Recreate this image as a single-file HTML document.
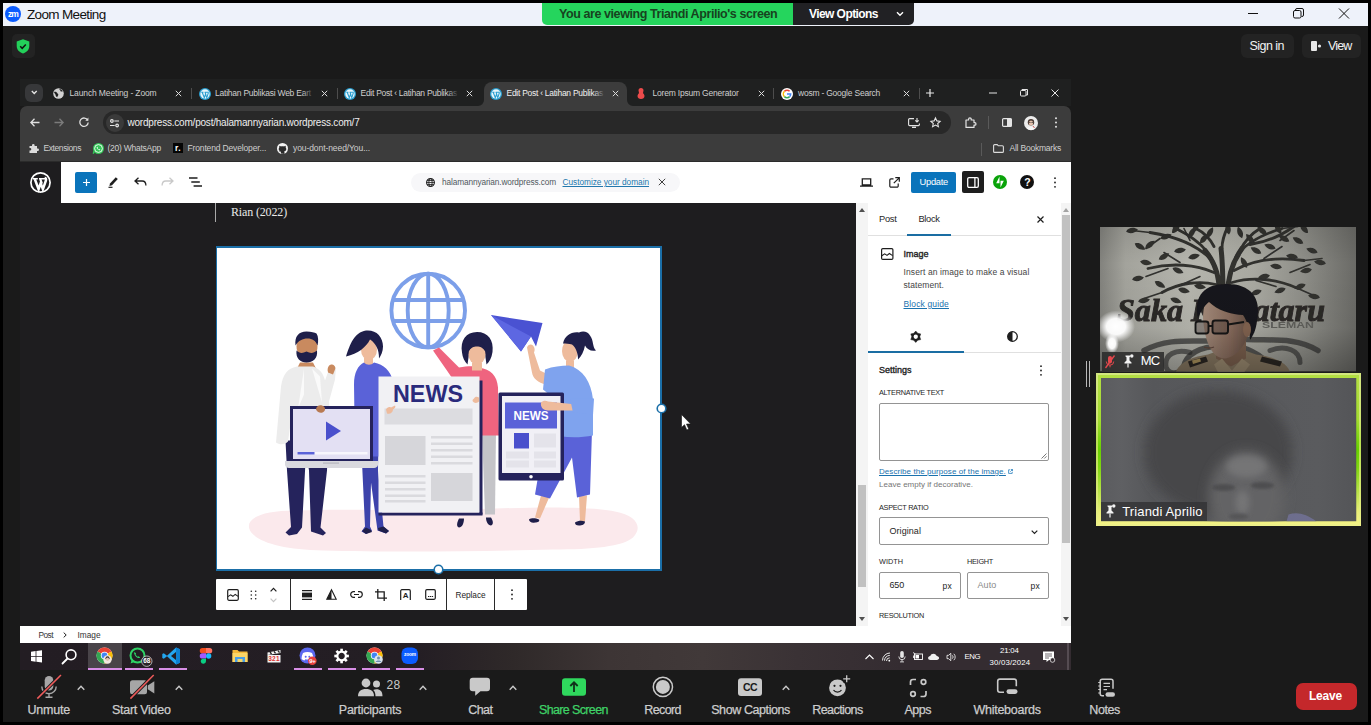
<!DOCTYPE html>
<html lang="en">
<head>
<meta charset="utf-8">
<title>Zoom Meeting</title>
<style>
*{box-sizing:border-box;margin:0;padding:0}
html,body{width:1371px;height:725px;overflow:hidden;background:#1a1a1a}
body{font-family:"Liberation Sans","DejaVu Sans",sans-serif;position:relative;color:#fff}
.a{position:absolute;white-space:nowrap}
svg{position:absolute;overflow:visible}
</style>
</head>
<body>
<!-- sec_frame -->
<div class="a" style="left:3px;top:3px;width:1365px;height:23px;background:#eef2fa;"></div>
<div class="a" style="left:5px;top:6px;width:16px;height:16px;background:#0b5cff;border-radius:50%"></div>
<div class="a" style="left:8px;top:9px;font-size:8.5px;line-height:10px;letter-spacing:-0.9px;color:#fff;font-weight:bold;">zm</div>
<div class="a" style="left:27px;top:7px;font-size:13.5px;line-height:16px;letter-spacing:-0.65px;color:#111;">Zoom Meeting</div>
<div class="a" style="left:542px;top:3px;width:251px;height:22px;background:#25d55d;border-radius:0 0 0 5px"></div>
<div class="a" style="left:559px;top:7px;font-size:12.5px;line-height:15px;letter-spacing:-0.42px;color:#17431f;font-weight:bold;">You are viewing Triandi Aprilio's screen</div>
<div class="a" style="left:793px;top:3px;width:121px;height:22px;background:#212124;border-radius:0 0 5px 0"></div>
<div class="a" style="left:809px;top:7px;font-size:12px;line-height:14px;letter-spacing:-0.57px;color:#fff;font-weight:bold;">View Options</div>
<svg style="left:896px;top:11px;" width="8" height="6" viewBox="0 0 8 6"><path d="M1 1.2l3 3 3-3" fill="none" stroke="#fff" stroke-width="1.4"/></svg>
<svg style="left:1248px;top:8px;" width="102" height="11" viewBox="0 0 102 11"><g fill="none" stroke="#111" stroke-width="1"><path d="M0 5.5h10"/><rect x="45.5" y="2.5" width="7.5" height="7.5" rx="1.5"/><path d="M47.500 2.500v-.5a1.500 1.500 0 0 1 1.500-1.500h5a1.500 1.500 0 0 1 1.500 1.500v5a1.500 1.500 0 0 1-1.500 1.500h-.5"/><path d="M91 .5l10 10M101 .5l-10 10"/></g></svg>
<div class="a" style="left:0px;top:0px;width:1371px;height:3px;background:#000;"></div>
<div class="a" style="left:0px;top:722px;width:1371px;height:3px;background:#000;"></div>
<div class="a" style="left:0px;top:0px;width:3px;height:725px;background:#000;"></div>
<div class="a" style="left:1368px;top:0px;width:3px;height:725px;background:#000;"></div>
<div class="a" style="left:12px;top:34px;width:23px;height:24px;background:#232323;border-radius:5px"></div>
<svg style="left:16px;top:39px;" width="14" height="15" viewBox="0 0 14 15"><path d="M7 .3l6.300 2.200v4.500c0 3.600-2.600 6.300-6.300 7.600C3.300 13.300.7 10.600.7 7V2.500z" fill="#23d05a"/><path d="M4.200 7.300l2 2 3.600-3.800" fill="none" stroke="#111" stroke-width="1.500"/></svg>
<div class="a" style="left:1241px;top:34px;width:53px;height:24px;background:#232323;border-radius:6px"></div>
<div class="a" style="left:1249.5px;top:38.5px;font-size:12.5px;line-height:15px;letter-spacing:-0.53px;color:#f2f2f2;">Sign in</div>
<div class="a" style="left:1302px;top:34px;width:59px;height:24px;background:#232323;border-radius:6px"></div>
<div class="a" style="left:1328px;top:38.5px;font-size:12.5px;line-height:15px;letter-spacing:-0.84px;color:#f2f2f2;">View</div>
<svg style="left:1311px;top:41px;" width="11" height="11" viewBox="0 0 11 11"><rect x="0" y="0" width="6" height="10" rx="1" fill="#e8e8e8"/><circle cx="8.500" cy="5" r="1.600" fill="#e8e8e8"/></svg>
<!-- sec_chrome -->
<div class="a" style="left:20px;top:79px;width:1051px;height:27px;background:#1f2020;"></div>
<div class="a" style="left:24.5px;top:83.5px;width:18.5px;height:18px;background:#37383a;border-radius:6px"></div>
<svg style="left:30.8px;top:90.3px;" width="6.5" height="5" viewBox="0 0 6.500 5"><path d="M.8 1l2.450 2.500L5.700 1" fill="none" stroke="#e6e6e6" stroke-width="1.300"/></svg>
<div class="a" style="left:484px;top:82px;width:143px;height:24px;background:#3c3c3c;border-radius:8px 8px 0 0"></div>
<svg style="left:478px;top:100px;" width="6" height="6" viewBox="0 0 6 6"><path d="M6 0v6H0A6 6 0 0 0 6 0z" fill="#3c3c3c"/></svg>
<svg style="left:627px;top:100px;" width="6" height="6" viewBox="0 0 6 6"><path d="M0 0v6h6A6 6 0 0 1 0 0z" fill="#3c3c3c"/></svg>
<svg style="left:53px;top:87.5px;" width="11" height="11" viewBox="0 0 11 11"><circle cx="5.500" cy="5.500" r="5.300" fill="#d2d2d2"/><path d="M1 4c1.200-.6 2.600-.2 3 .8.300.900 1.400.8 1.300 2-.1 1-1 1.200-1 2.400-1.300-.3-1.600-1.500-1.800-2.500C2.300 5.700 1.200 5.200 1 4zM6.200.9c.2.900 1.300.9 1.200 1.900-.1.800.9 1 1.600.6.500-.300 1 .1 1.300.6C9.600 2.200 8.100 1 6.200.9z" fill="#1f2020"/></svg>
<div class="a" style="left:69.5px;top:88px;font-size:8.5px;line-height:10px;letter-spacing:-0.13px;color:#cfcfcf;">Launch Meeting - Zoom</div>
<svg style="left:174.5px;top:89.5px;" width="7" height="7" viewBox="0 0 7 7"><path d="M.8.800l5.400 5.400M6.200.8L.8 6.200" stroke="#dcdcdc" stroke-width="1" fill="none"/></svg>
<div class="a" style="left:191px;top:88px;width:1px;height:11px;background:#4d4d4d;"></div>
<svg style="left:198.5px;top:87.5px;" width="12" height="12" viewBox="0 0 12 12"><circle cx="6" cy="6" r="6" fill="#2a9fd0"/><circle cx="6" cy="6" r="4.700" fill="#eaf6fb"/><path d="M2.300 4.200h2.200M5.600 4.200h3.900M3.200 4.300l2.100 5.400 1.200-3.300 1.300 3.300 1.700-5.300M6 4.300l1 2.500" stroke="#2a9fd0" stroke-width="1.100" fill="none"/></svg>
<div class="a" style="left:215px;top:88px;font-size:8.5px;line-height:10px;letter-spacing:-0.23px;color:#cfcfcf;">Latihan Publikasi Web Eart</div>
<div class="a" style="left:302px;top:86px;width:14px;height:14px;background:linear-gradient(90deg,rgba(31,32,32,0),#1f2020 85%);"></div>
<svg style="left:320.5px;top:89.5px;" width="7" height="7" viewBox="0 0 7 7"><path d="M.8.800l5.400 5.400M6.200.8L.8 6.200" stroke="#dcdcdc" stroke-width="1" fill="none"/></svg>
<div class="a" style="left:336.5px;top:88px;width:1px;height:11px;background:#4d4d4d;"></div>
<svg style="left:344px;top:87.5px;" width="12" height="12" viewBox="0 0 12 12"><circle cx="6" cy="6" r="6" fill="#2a9fd0"/><circle cx="6" cy="6" r="4.700" fill="#eaf6fb"/><path d="M2.300 4.200h2.200M5.600 4.200h3.900M3.200 4.300l2.100 5.400 1.200-3.300 1.300 3.300 1.700-5.300M6 4.300l1 2.500" stroke="#2a9fd0" stroke-width="1.100" fill="none"/></svg>
<div class="a" style="left:360.5px;top:88px;font-size:8.5px;line-height:10px;letter-spacing:-0.27px;color:#cfcfcf;">Edit Post ‹ Latihan Publikas</div>
<div class="a" style="left:447px;top:86px;width:14px;height:14px;background:linear-gradient(90deg,rgba(31,32,32,0),#1f2020 85%);"></div>
<svg style="left:466px;top:89.5px;" width="7" height="7" viewBox="0 0 7 7"><path d="M.8.800l5.400 5.400M6.200.8L.8 6.200" stroke="#dcdcdc" stroke-width="1" fill="none"/></svg>
<svg style="left:490px;top:87.5px;" width="12" height="12" viewBox="0 0 12 12"><circle cx="6" cy="6" r="6" fill="#2a9fd0"/><circle cx="6" cy="6" r="4.700" fill="#eaf6fb"/><path d="M2.300 4.200h2.200M5.600 4.200h3.900M3.200 4.300l2.100 5.400 1.200-3.300 1.300 3.300 1.700-5.300M6 4.300l1 2.500" stroke="#2a9fd0" stroke-width="1.100" fill="none"/></svg>
<div class="a" style="left:506.5px;top:88px;font-size:8.5px;line-height:10px;letter-spacing:-0.27px;color:#f0f0f0;">Edit Post ‹ Latihan Publikas</div>
<div class="a" style="left:593px;top:86px;width:14px;height:14px;background:linear-gradient(90deg,rgba(60,60,60,0),#3c3c3c 85%);"></div>
<svg style="left:611.5px;top:89.5px;" width="7" height="7" viewBox="0 0 7 7"><path d="M.8.800l5.400 5.400M6.200.8L.8 6.200" stroke="#dcdcdc" stroke-width="1" fill="none"/></svg>
<svg style="left:637px;top:88px;" width="8" height="11" viewBox="0 0 8 11"><path d="M4 0c1.600 0 2.500 1.200 2.500 2.600 0 1-.5 1.700-.5 2.400 0 .8 1.500 1.200 1.500 3 0 1.700-1.500 3-3.500 3S.5 9.700.5 8c0-1.800 1.500-2.200 1.500-3 0-.7-.5-1.400-.5-2.400C1.500 1.200 2.400 0 4 0z" fill="#ec4b4b"/></svg>
<div class="a" style="left:652.5px;top:88px;font-size:8.5px;line-height:10px;letter-spacing:-0.2px;color:#cfcfcf;">Lorem Ipsum Generator</div>
<svg style="left:757.5px;top:89.5px;" width="7" height="7" viewBox="0 0 7 7"><path d="M.8.800l5.400 5.400M6.200.8L.8 6.200" stroke="#dcdcdc" stroke-width="1" fill="none"/></svg>
<div class="a" style="left:773px;top:88px;width:1px;height:11px;background:#4d4d4d;"></div>
<svg style="left:781px;top:87.5px;" width="12" height="12" viewBox="0 0 12 12"><circle cx="6" cy="6" r="6" fill="#fff"/><path d="M6 2.300a3.700 3.700 0 0 1 2.600 1" stroke="#ea4335" stroke-width="1.500" fill="none"/><path d="M3.400 3.400A3.700 3.700 0 0 1 6 2.300" stroke="#ea4335" stroke-width="1.500" fill="none"/><path d="M3.400 8.600a3.700 3.700 0 0 1 0-5.200" stroke="#fbbc05" stroke-width="1.500" fill="none"/><path d="M8.600 8.600a3.700 3.700 0 0 1-5.200 0" stroke="#34a853" stroke-width="1.500" fill="none"/><path d="M6 6h3.700a3.700 3.700 0 0 1-1.100 2.600" stroke="#4285f4" stroke-width="1.500" fill="none"/></svg>
<div class="a" style="left:798px;top:88px;font-size:8.5px;line-height:10px;letter-spacing:-0.22px;color:#cfcfcf;">wosm - Google Search</div>
<svg style="left:902.5px;top:89.5px;" width="7" height="7" viewBox="0 0 7 7"><path d="M.8.800l5.400 5.400M6.200.8L.8 6.200" stroke="#dcdcdc" stroke-width="1" fill="none"/></svg>
<div class="a" style="left:918.5px;top:88px;width:1px;height:11px;background:#4d4d4d;"></div>
<svg style="left:926px;top:89px;" width="8" height="8" viewBox="0 0 8 8"><path d="M4 0v8M0 4h8" stroke="#e8e8e8" stroke-width="1.200"/></svg>
<svg style="left:989px;top:89px;" width="70" height="8" viewBox="0 0 70 8"><g fill="none" stroke="#e4e4e4" stroke-width="1"><path d="M0 4h8"/><rect x="31.500" y="1.500" width="5.500" height="5.500" rx="1"/><path d="M33 1.500v-1h5.500v5.500h-1.500"/><path d="M62.500.5l7 7M69.500.5l-7 7"/></g></svg>
<div class="a" style="left:20px;top:106px;width:1051px;height:32px;background:#3c3c3c;border-radius:7px 7px 0 0"></div>
<svg style="left:30px;top:117.5px;" width="10" height="9" viewBox="0 0 10 9"><path d="M9.500 4.500H1M4.500.8L.9 4.500l3.600 3.700" stroke="#e0e0e0" fill="none" stroke-width="1.300"/></svg>
<svg style="left:54px;top:117.5px;" width="10" height="9" viewBox="0 0 10 9"><path d="M.5 4.500H9M5.500.8l3.600 3.700-3.600 3.700" stroke="#7b7b7b" fill="none" stroke-width="1.300"/></svg>
<svg style="left:79px;top:117px;" width="10" height="10" viewBox="0 0 10 10"><path d="M8.700 3.200A4.200 4.200 0 1 0 9.200 5.500" stroke="#e0e0e0" fill="none" stroke-width="1.300"/><path d="M9.400.6v3.100H6.300z" fill="#e0e0e0"/></svg>
<div class="a" style="left:103px;top:111px;width:848px;height:23px;background:#282828;border-radius:12px"></div>
<div class="a" style="left:105.5px;top:113.5px;width:18px;height:18px;background:#3a3a3a;border-radius:50%"></div>
<svg style="left:110px;top:118.5px;" width="9" height="8.5" viewBox="0 0 9 8.500"><g stroke="#e6e6e6" stroke-width="1.200" fill="none"><circle cx="1.900" cy="2" r="1.300"/><path d="M4.300 2H9M0 6.500h4.700"/><circle cx="7.100" cy="6.500" r="1.300"/></g></svg>
<div class="a" style="left:127.5px;top:116.5px;font-size:10px;line-height:12px;letter-spacing:-0.21px;color:#efefef;">wordpress.com/post/halamannyarian.wordpress.com/7</div>
<svg style="left:908px;top:117.5px;" width="12" height="10" viewBox="0 0 12 10"><g stroke="#e4e4e4" stroke-width="1.100" fill="none"><path d="M6 .6H1.600a1 1 0 0 0-1 1v5a1 1 0 0 0 1 1h8.800a1 1 0 0 0 1-1V5.500M4 9.400h4"/><path d="M9 0v3.800M7.300 2.300L9 4l1.700-1.700"/></g></svg>
<svg style="left:930px;top:117px;" width="11" height="11" viewBox="0 0 11 11"><path d="M5.500.9l1.400 3 3.200.4-2.400 2.200.7 3.200-2.900-1.600-2.900 1.600.7-3.200L.9 4.300l3.200-.4z" fill="none" stroke="#e4e4e4" stroke-width="1.100"/></svg>
<svg style="left:964.5px;top:116.5px;" width="11" height="11" viewBox="0 0 11 11"><path d="M1 3h2.600v-.8a1.300 1.300 0 0 1 2.600 0V3H9v2.600h.7a1.300 1.300 0 0 1 0 2.600H9V10.400H1z" fill="none" stroke="#e4e4e4" stroke-width="1.200" stroke-linejoin="round"/></svg>
<div class="a" style="left:988px;top:116px;width:1px;height:13px;background:#5a5a5a;"></div>
<svg style="left:1001.5px;top:118px;" width="10" height="9" viewBox="0 0 10 9"><rect x=".6" y=".6" width="8.800" height="7.800" rx="1" fill="none" stroke="#e4e4e4" stroke-width="1.200"/><rect x="5" y=".6" width="4.400" height="7.800" fill="#e4e4e4"/></svg>
<svg style="left:1024px;top:115.5px;" width="14" height="14" viewBox="0 0 14 14"><circle cx="7" cy="7" r="7" fill="#ececec"/><circle cx="7" cy="6.200" r="3.200" fill="#4a3a34"/><ellipse cx="7" cy="7" rx="2.200" ry="2.500" fill="#e6c3ae"/><path d="M2.500 12.500c1-2.500 8-2.500 9 0A7 7 0 0 1 2.500 12.500z" fill="#f7f7f7"/><path d="M5 6.500h1.600M7.400 6.500H9" stroke="#333" stroke-width=".7"/><path d="M9 10l1.500 2" stroke="#c33" stroke-width=".8"/></svg>
<svg style="left:1054.5px;top:117px;" width="2" height="11" viewBox="0 0 2 11"><circle cx="1" cy="1.200" r="1" fill="#e4e4e4"/><circle cx="1" cy="5.500" r="1" fill="#e4e4e4"/><circle cx="1" cy="9.800" r="1" fill="#e4e4e4"/></svg>
<div class="a" style="left:20px;top:138px;width:1051px;height:23px;background:#3c3c3c;"></div>
<svg style="left:28.5px;top:143px;" width="10" height="10" viewBox="0 0 10 10"><path d="M.5 3h2.500v-.7a1.300 1.300 0 0 1 2.600 0V3H8v2.400h.7a1.300 1.300 0 0 1 0 2.600H8V10H.5V7.500h.6a1.200 1.200 0 0 0 0-2.400H.5z" fill="#dcdcdc"/></svg>
<div class="a" style="left:43.5px;top:143px;font-size:8.5px;line-height:10px;letter-spacing:-0.41px;color:#cfcfcf;">Extensions</div>
<svg style="left:92.5px;top:142.5px;" width="11" height="11" viewBox="0 0 11 11"><circle cx="5.500" cy="5.500" r="5.500" fill="#35c759"/><path d="M.3 10.800l.9-2.700" stroke="#35c759" stroke-width="1.500"/><circle cx="5.500" cy="5.500" r="3.900" fill="none" stroke="#fff" stroke-width=".9"/><path d="M4 3.700c-.5.500-.3 1.600.7 2.600s2.100 1.300 2.600.7l-.9-.9-.6.300c-.5-.2-1-.8-1.200-1.200l.3-.6z" fill="#fff"/></svg>
<div class="a" style="left:107.5px;top:143px;font-size:8.5px;line-height:10px;letter-spacing:-0.25px;color:#cfcfcf;">(20) WhatsApp</div>
<div class="a" style="left:173px;top:143px;width:10px;height:10px;background:#050505;"></div>
<div class="a" style="left:175px;top:143px;font-size:8.5px;line-height:10px;letter-spacing:0.4px;color:#fff;font-weight:bold;">r.</div>
<div class="a" style="left:187.5px;top:143px;font-size:8.5px;line-height:10px;letter-spacing:-0.15px;color:#cfcfcf;">Frontend Developer...</div>
<svg style="left:277px;top:142.5px;" width="11" height="11" viewBox="0 0 11 11"><circle cx="5.500" cy="5.500" r="5.500" fill="#f4f4f4"/><path d="M3.900 10.400V8.900c-1.300.3-1.800-.6-2.200-1 .9.100 1 .9 1.600.9.300 0 .5-.1.700-.3-1.300-.3-2.300-.8-2.300-2.600 0-.6.200-1.100.6-1.500-.1-.4-.2-1 .1-1.600.6 0 1.200.4 1.500.7.900-.3 2.300-.3 3.200 0 .3-.3.900-.7 1.500-.7.300.6.200 1.200.1 1.600.4.400.6.900.6 1.500 0 1.800-1 2.300-2.300 2.600.4.300.5.800.5 1.300v1.200z" fill="#2b2b2b"/></svg>
<div class="a" style="left:293px;top:143px;font-size:8.5px;line-height:10px;letter-spacing:-0.08px;color:#cfcfcf;">you-dont-need/You...</div>
<div class="a" style="left:981px;top:143px;width:1px;height:13px;background:#5a5a5a;"></div>
<svg style="left:993px;top:143.5px;" width="11" height="9" viewBox="0 0 11 9"><path d="M.6 1.600a1 1 0 0 1 1-1h2.600l1.100 1.200h4.100a1 1 0 0 1 1 1v4.600a1 1 0 0 1-1 1H1.600a1 1 0 0 1-1-1z" fill="none" stroke="#dcdcdc" stroke-width="1.100"/></svg>
<div class="a" style="left:1009.5px;top:143px;font-size:8.5px;line-height:10px;letter-spacing:-0.22px;color:#cfcfcf;">All Bookmarks</div>
<!-- sec_wp -->
<div class="a" style="left:20px;top:161px;width:1051px;height:465px;background:#1e1d1f;"></div>
<div class="a" style="left:20px;top:161px;width:1051px;height:1px;background:#2b2b2b;"></div>
<div class="a" style="left:61px;top:162px;width:1010px;height:41px;background:#fff;"></div>
<svg style="left:30px;top:172px;" width="21" height="21" viewBox="0 0 21 21"><circle cx="10.500" cy="10.500" r="9.600" fill="none" stroke="#fff" stroke-width="1.700"/><path d="M3 6.800h4.800M9 6.800h6" stroke="#fff" stroke-width="1.500"/><path d="M4.800 7l3.800 10.300 2.100-6.200 2.200 6.200 3-8.800c.5-1.500-.2-2.400-1.200-2.400" fill="none" stroke="#fff" stroke-width="2.500"/><path d="M10.200 7l1.700 4.600" stroke="#fff" stroke-width="2.200"/></svg>
<div class="a" style="left:75px;top:171.5px;width:22px;height:21.5px;background:#0a74bb;border-radius:2px"></div>
<svg style="left:81.5px;top:177.5px;" width="9" height="9" viewBox="0 0 9 9"><path d="M4.500 1v7M1 4.500h7" stroke="#fff" stroke-width="1.200"/></svg>
<svg style="left:107px;top:175px;" width="13" height="13" viewBox="0 0 13 13"><path d="M3 8.500l5.800-6.300 2 1.800L5 10.300l-2.600.7z" fill="#1e1e1e"/><path d="M1.500 12.300h4" stroke="#1e1e1e" stroke-width="1.200"/></svg>
<svg style="left:134px;top:177px;" width="13" height="9" viewBox="0 0 13 9"><path d="M4.500.8L1 4l3.500 3.200M1.200 4h7c2.300 0 3.700 1.700 3.700 4.500" fill="none" stroke="#1e1e1e" stroke-width="1.300"/></svg>
<svg style="left:161px;top:177px;" width="13" height="9" viewBox="0 0 13 9"><path d="M8.500.8L12 4l-3.500 3.200M11.800 4h-7C2.500 4 1.100 5.700 1.100 8.500" fill="none" stroke="#c9c9c9" stroke-width="1.300"/></svg>
<svg style="left:189px;top:177px;" width="13" height="10" viewBox="0 0 13 10"><path d="M0 1h8.500M2.300 5h8.500M4.600 9h8.400" stroke="#1e1e1e" stroke-width="1.300"/></svg>
<div class="a" style="left:411px;top:172.5px;width:269px;height:19.5px;background:#f7f7f9;border-radius:10px"></div>
<svg style="left:425.5px;top:177.5px;" width="9" height="9" viewBox="0 0 9 9"><circle cx="4.500" cy="4.500" r="3.900" fill="none" stroke="#1e1e1e" stroke-width="1.100"/><ellipse cx="4.500" cy="4.500" rx="1.700" ry="3.900" fill="none" stroke="#1e1e1e" stroke-width=".9"/><path d="M.6 4.500h7.800M1.200 2.500h6.600M1.200 6.500h6.600" stroke="#1e1e1e" stroke-width=".8"/></svg>
<div class="a" style="left:442px;top:177px;font-size:8.3px;line-height:10px;letter-spacing:-0.13px;color:#50575e;">halamannyarian.wordpress.com</div>
<div class="a" style="left:562.5px;top:177px;font-size:8.3px;line-height:10px;letter-spacing:-0.03px;color:#2278ad;text-decoration:underline;">Customize your domain</div>
<svg style="left:657.5px;top:178px;" width="8" height="8" viewBox="0 0 8 8"><path d="M.8.800l6.400 6.400M7.200.8L.8 7.200" stroke="#2a2a2a" stroke-width=".9"/></svg>
<svg style="left:860px;top:177.5px;" width="13" height="9" viewBox="0 0 13 9"><path d="M2.300.8h8.400v6H2.300zM0 8.200h13" fill="none" stroke="#1e1e1e" stroke-width="1.300"/></svg>
<svg style="left:888.5px;top:176.5px;" width="11" height="11" viewBox="0 0 11 11"><path d="M4.500 1.800H2a1.200 1.200 0 0 0-1.200 1.200V9A1.200 1.200 0 0 0 2 10.200h6A1.200 1.200 0 0 0 9.200 9V6.500" fill="none" stroke="#1e1e1e" stroke-width="1.200"/><path d="M6.300.7h4v4M10.200.8L4.800 6.200" fill="none" stroke="#1e1e1e" stroke-width="1.200"/></svg>
<div class="a" style="left:911px;top:171.5px;width:45px;height:21.5px;background:#0a74bb;border-radius:2px"></div>
<div class="a" style="left:919.5px;top:177px;font-size:9.3px;line-height:11px;letter-spacing:-0.25px;color:#fff;">Update</div>
<div class="a" style="left:961.5px;top:171px;width:22px;height:22px;background:#1e1e1e;border-radius:2px"></div>
<svg style="left:966.5px;top:176.5px;" width="12" height="11" viewBox="0 0 12 11"><rect x=".7" y=".7" width="10.600" height="9.600" rx="1.300" fill="none" stroke="#fff" stroke-width="1.300"/><path d="M7.900.7v9.600" stroke="#fff" stroke-width="1.300"/></svg>
<svg style="left:992.5px;top:175px;" width="14" height="14" viewBox="0 0 14 14"><circle cx="7" cy="7" r="7" fill="#0aa30a"/><path d="M6.500 1.500v6.700H3.200zM7.500 12.500V5.800h3.300z" fill="#fff"/></svg>
<svg style="left:1020px;top:175px;" width="14" height="14" viewBox="0 0 14 14"><circle cx="7" cy="7" r="7" fill="#111"/></svg>
<div class="a" style="left:1024.2px;top:175.8px;font-size:10.5px;line-height:13px;letter-spacing:-0.81px;color:#fff;font-weight:bold;">?</div>
<svg style="left:1053.5px;top:176.5px;" width="2" height="11" viewBox="0 0 2 11"><circle cx="1" cy="1.200" r=".9" fill="#1e1e1e"/><circle cx="1" cy="5.500" r=".9" fill="#1e1e1e"/><circle cx="1" cy="9.800" r=".9" fill="#1e1e1e"/></svg>
<div class="a" style="left:215px;top:203px;width:1px;height:19px;background:#a9a9a9;"></div>
<div class="a" style="left:231px;top:204.5px;font-size:12px;line-height:14px;letter-spacing:-0.15px;color:#e8e8e8;font-family:'Liberation Serif',serif;">Rian (2022)</div>
<div class="a" style="left:216px;top:578.5px;width:311.3px;height:31.5px;background:#fff;border-radius:1px"></div>
<div class="a" style="left:289.8px;top:578.5px;width:1px;height:31.5px;background:#2a2a2a;"></div>
<div class="a" style="left:446px;top:578.5px;width:1px;height:31.5px;background:#2a2a2a;"></div>
<div class="a" style="left:493.8px;top:578.5px;width:1px;height:31.5px;background:#2a2a2a;"></div>
<svg style="left:226.5px;top:588.5px;" width="12" height="12" viewBox="0 0 12 12"><rect x=".7" y=".7" width="10.600" height="10.600" rx="1.200" fill="none" stroke="#1e1e1e" stroke-width="1.200"/><path d="M.9 7.600l2.800-1.800 2.200 1.500 2.300-1.900 2.900 2" fill="none" stroke="#1e1e1e" stroke-width="1.100"/></svg>
<svg style="left:250px;top:589.5px;" width="7" height="10" viewBox="0 0 7 10"><circle cx="1.3" cy="1.2" r=".8" fill="#1e1e1e"/><circle cx="1.3" cy="5" r=".8" fill="#1e1e1e"/><circle cx="1.3" cy="8.8" r=".8" fill="#1e1e1e"/><circle cx="5.7" cy="1.2" r=".8" fill="#1e1e1e"/><circle cx="5.7" cy="5" r=".8" fill="#1e1e1e"/><circle cx="5.7" cy="8.8" r=".8" fill="#1e1e1e"/></svg>
<svg style="left:270px;top:586.5px;" width="7" height="5" viewBox="0 0 7 5"><path d="M.6 4.300l2.900-3 2.900 3" fill="none" stroke="#1e1e1e" stroke-width="1.200"/></svg>
<svg style="left:270px;top:598px;" width="7" height="5" viewBox="0 0 7 5"><path d="M.6.700l2.900 3 2.900-3" fill="none" stroke="#c3c3c3" stroke-width="1.200"/></svg>
<svg style="left:301.5px;top:589.5px;" width="10" height="10" viewBox="0 0 10 10"><path d="M0 .6h10M0 9.400h10" stroke="#1e1e1e" stroke-width="1.200"/><rect x="0" y="2.600" width="10" height="4.800" fill="#1e1e1e"/></svg>
<svg style="left:326px;top:589px;" width="11" height="11" viewBox="0 0 11 11"><path d="M5.500.8L.8 10.200h9.400z" fill="none" stroke="#1e1e1e" stroke-width="1.100"/><path d="M5.500.8v9.400H.8z" fill="#1e1e1e"/></svg>
<svg style="left:350px;top:591px;" width="13" height="7" viewBox="0 0 13 7"><path d="M5 .7H3.500a2.800 2.800 0 0 0 0 5.600H5M8 .7h1.500a2.800 2.800 0 0 1 0 5.600H8M4 3.500h5" fill="none" stroke="#1e1e1e" stroke-width="1.200"/></svg>
<svg style="left:374.5px;top:588.5px;" width="12" height="12" viewBox="0 0 12 12"><path d="M2.800 0v9.200H12M0 2.800h9.200V12" fill="none" stroke="#1e1e1e" stroke-width="1.300"/></svg>
<svg style="left:400px;top:589px;" width="11" height="12" viewBox="0 0 11 12"><path d="M.7 11V1.900A1.200 1.200 0 0 1 1.900.7h7.200a1.200 1.200 0 0 1 1.200 1.200V11" fill="none" stroke="#1e1e1e" stroke-width="1.200"/></svg>
<div class="a" style="left:402.8px;top:590.8px;font-size:8px;line-height:10px;letter-spacing:-0.38px;color:#1e1e1e;font-weight:bold;">A</div>
<svg style="left:424.5px;top:589px;" width="11" height="11" viewBox="0 0 11 11"><rect x=".7" y=".7" width="9.600" height="9.600" rx="1.200" fill="none" stroke="#1e1e1e" stroke-width="1.200"/><path d="M3 7.500h1.300M4.900 7.500h1.300M6.800 7.500h1.300" stroke="#1e1e1e" stroke-width="1"/></svg>
<div class="a" style="left:455.5px;top:590px;font-size:8.3px;line-height:10px;letter-spacing:-0.06px;color:#1e1e1e;">Replace</div>
<svg style="left:510.5px;top:589px;" width="2" height="11" viewBox="0 0 2 11"><circle cx="1" cy="1.200" r=".9" fill="#1e1e1e"/><circle cx="1" cy="5.500" r=".9" fill="#1e1e1e"/><circle cx="1" cy="9.800" r=".9" fill="#1e1e1e"/></svg>
<div class="a" style="left:20px;top:626px;width:1051px;height:17px;background:#fff;"></div>
<div class="a" style="left:38.5px;top:629.5px;font-size:8.3px;line-height:10px;letter-spacing:-0.53px;color:#333;">Post</div>
<svg style="left:63px;top:632px;" width="4" height="6" viewBox="0 0 4 6"><path d="M.7.600l2.500 2.400L.7 5.400" fill="none" stroke="#1e1e1e" stroke-width="1"/></svg>
<div class="a" style="left:77.5px;top:629.5px;font-size:8.3px;line-height:10px;letter-spacing:-0.01px;color:#333;">Image</div>
<!-- sec_art -->
<div class="a" style="left:215.5px;top:246px;width:446px;height:325px;background:#1b6fa8;"></div>
<div class="a" style="left:217px;top:247.5px;width:443px;height:321.5px;background:#fff;"></div>
<svg style="left:217px;top:247.5px;" width="443" height="321.5" viewBox="217 247.500 443 321.500"><path d="M250 530c-6-12 12-20 45-20 60-2 110 1 170-1 60-2 120-4 150 2 22 4 28 16 18 26-10 9-40 12-80 12-70 2-160 3-230 1-40-1-66-8-73-20z" fill="#fbe9ec"/><g fill="none" stroke="#7c9fe9" stroke-width="3.900"><circle cx="428.200" cy="310" r="36.800"/><ellipse cx="428.200" cy="310" rx="20.500" ry="36.800"/><path d="M428.200 273v74M393 299.500h70.500M393 320.500h70.500"/></g><path d="M285.500 440L328 440L327 470L320.500 527L326 532.500L323 535L311 531L309 470L306 452L302 527L297 533.500L289 535L285.500 532L291 526.500L287 470Z" fill="#25235c"/><path d="M300 362h13l3 6h-19z" fill="#c98a5f"/><path d="M297 366c-10 2-14 8-16 20l-5 56c4 3 9 2 12-1l4-28 3 28h36l-2-40 6-22 1-12-6-1-5 14c-2-8-6-12-12-14z" fill="#ececec"/><path d="M304 368l-6 40 6-14zM312 368l10 34-2-26z" fill="#fafafa"/><path d="M328 372c-1-4 0-7 3-8 3 0 5 2 4 5l-2 5z" fill="#c98a5f"/><ellipse cx="307" cy="346" rx="10.500" ry="12" fill="#c98a5f"/><path d="M295.500 345c-1-9 3-14 11-14 5 0 8 1 10 2 2 3 2 8 1 12-2-5-5-7-10-7-5 0-9 2-12 7z" fill="#1f1f4a"/><path d="M296.500 350c3 3 6 3 10 1 4 2 7 2 10.500-1 1 8-4 12-10.500 12-6 0-11-4-10-12z" fill="#1f1f4a"/><path d="M361 440L379 440L378 470L383.500 526L389 530.500L386 533L377.500 530L371 482L370 526L372 530.500L366 533.500L361.500 531L365 526Z" fill="#3d43ab"/><path d="M362 530.500l4-3.500 5 2.500 1 2-6 2zM378 527.500l5.500-1.500 5.500 4.500-3 2.500-7.500-3z" fill="#1f1f4a"/><path d="M364 357h9v8h-9z" fill="#eebb9c"/><path d="M364 362c3 3 7 3 10 0 10 2 16 8 19 18l2 76h-40l-1-72c0-12 4-19 10-22z" fill="#5a62d8"/><ellipse cx="369" cy="349" rx="8" ry="10.500" fill="#eebb9c"/><path d="M346 356c4-12 8-24 20-26 10-1 17 6 17 16 0 5-2 9-4 12 0-9-3-15-9-19-4 8-12 14-24 17z" fill="#1f1f4a"/><path d="M290 405.500h83v55h-83z" fill="#25235c"/><path d="M293 408.500h77v50h-77z" fill="#e3e0f3"/><path d="M326 421v19l15-9.500z" fill="#4a50cc"/><path d="M297.500 451.500h70v2.500h-70z" fill="#f7f6fc"/><path d="M297.500 451.500h17v2.500h-17z" fill="#5a62d8"/><path d="M285 460.500h93v3.500c0 2-2 3.500-4 3.500h-85c-2 0-4-1.500-4-3.500z" fill="#d9d9de"/><path d="M323 462h16v1.200h-16z" fill="#b5b5bd"/><path d="M316 409c0-3 3-5 6-4 3 1 4 4 2 6-2 2-6 2-8-2z" fill="#b87a52"/><path d="M482 430h14l-1 84h-10z" fill="#c4c4c8"/><path d="M459 518c-2 4-3 8 0 9 3 0 5-4 5-9zM486 517c0 4 2 8 5 8 3-1 2-5 0-8z" fill="#1f1f4a"/><path d="M433 350l6-3 20 20c8-1 14-2 20 0 12 2 18 8 19 20l1 48h-18l-2-46-16-4c-6-2-10-6-14-12z" fill="#ef647f"/><path d="M472 362h10v8h-10z" fill="#eebb9c"/><path d="M462 352c-2-12 4-20.500 15-20.500s17 8 15.500 20c-1 6-3 10-6 12.500l-2-14h-15l-2 14c-3-3-5-7-5.500-12z" fill="#1f1f4a"/><ellipse cx="477" cy="354" rx="8.500" ry="10" fill="#eebb9c"/><path d="M468.500 351c0-7 3-11 8.500-11s8.500 4 8.500 11c-3-4-5-5-8.500-5s-6 1-8.500 5z" fill="#1f1f4a"/><path d="M479 380h3.500v134h-3.500z" fill="#25235c"/><path d="M378.500 512h104v3h-104z" fill="#25235c"/><path d="M378.500 376h101v136h-101z" fill="#f1f1f4"/><path d="M384.500 408h88v16h-88z" fill="#dcdce0"/><path d="M385 435.500h40.500v29h-40.500zM431 472.500h41.500v28h-41.500z" fill="#d6d6da"/><path d="M431 435.5h41.500v2.600h-41.500z" fill="#dadade"/><path d="M431 442h41.500v2.600h-41.500z" fill="#dadade"/><path d="M431 448.5h41.500v2.600h-41.500z" fill="#dadade"/><path d="M431 455h41.500v2.600h-41.500z" fill="#dadade"/><path d="M431 461.5h41.500v2.600h-41.500z" fill="#dadade"/><path d="M385 474.5h40.500v2.600h-40.500z" fill="#dadade"/><path d="M385 481h40.500v2.600h-40.500z" fill="#dadade"/><path d="M385 487.5h40.500v2.600h-40.500z" fill="#dadade"/><path d="M385 494h40.500v2.600h-40.500z" fill="#dadade"/><path d="M385 499.5h40.500v2.600h-40.500z" fill="#dadade"/><text x="428" y="401" text-anchor="middle" font-family="Liberation Sans,DejaVu Sans,sans-serif" font-weight="bold" font-size="23.500" fill="#2a2a7c" textLength="70" lengthAdjust="spacingAndGlyphs">NEWS</text><path d="M386 409c1-2 3-3 5-2l4-2c1 1 0 3-2 4 0 3-3 5-6 4z" fill="#eebb9c"/><path d="M479 397c-2-1-4-1-5 1-2 1-2 3 0 4 2 1 4 0 5-1z" fill="#eebb9c"/><path d="M541 495l-6 22 5 1 10-23zM579 495l1 26 5 0 2-26z" fill="#eebb9c"/><path d="M529 519c3-2 7-1 10 0 1 2-1 3-4 3-3 1-6-1-6-3zM575 522c3-2 7-2 10-1 0 3-3 4-6 4-3 0-4-1-4-3z" fill="#1f1f4a"/><path d="M546 430h46l-2 64-13 3-5-40-22 41-15-4z" fill="#5a62d8"/><path d="M527 347c1-3 4-4 6-2 2 2 2 5 1 7l6 18 8 4-2 10c-8-2-13-6-14-12z" fill="#eebb9c"/><path d="M566 360h8v8h-8z" fill="#eebb9c"/><path d="M545 369c8-3 16-4 24-4 14 4 22 16 24 34l0 36c-16 3-32 2-46-2l1-40-5-4z" fill="#7fa3ee"/><ellipse cx="570" cy="350.500" rx="8" ry="11" fill="#eebb9c"/><path d="M563 343c2-8 8-12 16-11 4-2 9-1 11 3 4 5 2 11 6 15-5 1-9-1-11-5-1 6-4 11-7 14 0-6-2-12-6-15-3-1-6-1-9-1z" fill="#1f1f4a"/><path d="M491 314.500l51.500 8-6.500 23.500-5-10-10 15z" fill="#4a52d2"/><path d="M491 314.500l40 21.500-10 15z" fill="#5d67e2"/><rect x="498.500" y="392" width="65.500" height="88" rx="1.500" fill="#25235c"/><path d="M502 395.500h58.500v77h-58.500z" fill="#f1f0f6"/><path d="M505 402h52v26h-52z" fill="#5a62d8"/><text x="531" y="419.500" text-anchor="middle" font-family="Liberation Sans,DejaVu Sans,sans-serif" font-weight="bold" font-size="12" fill="#fff" textLength="35" lengthAdjust="spacingAndGlyphs">NEWS</text><path d="M514 432.500h15v15.500h-15z" fill="#4a50cc"/><path d="M534 433h22v14h-22zM506 451h23v7h-23zM534 451h22v7h-22zM506 460h23v7h-23zM534 460h22v7h-22z" fill="#e4e3ea"/><circle cx="531" cy="476.300" r="1.800" fill="#fff"/><path d="M541 402c2-2 5-2 7-1l28 3c3 1 4 4 2 6l-30 0c-4 0-8-3-7-8z" fill="#eebb9c"/><path d="M570 398l24 0-1 16-20-2z" fill="#7fa3ee"/></svg>
<svg style="left:655.5px;top:402.5px;" width="11" height="11" viewBox="0 0 11 11"><circle cx="5.500" cy="5.500" r="4.300" fill="#fff" stroke="#1b6fa8" stroke-width="1.600"/></svg>
<svg style="left:433px;top:564px;" width="11" height="11" viewBox="0 0 11 11"><circle cx="5.500" cy="5.500" r="4.300" fill="#fff" stroke="#1b6fa8" stroke-width="1.600"/></svg>
<svg style="left:681px;top:413.5px;" width="11" height="17" viewBox="0 0 11 17"><path d="M.5.500v13l3-2.800 2.300 5.300 2-.9-2.300-5.100h4.200z" fill="#fff" stroke="#111" stroke-width=".6"/></svg>
<!-- sec_side -->
<div class="a" style="left:856px;top:203px;width:11.5px;height:423px;background:#f4f4f4;"></div>
<div class="a" style="left:857.5px;top:485px;width:8.5px;height:101.5px;background:#c1c1c1;"></div>
<svg style="left:858.5px;top:207.5px;" width="6" height="4" viewBox="0 0 6 4"><path d="M3 0l3 4H0z" fill="#505050"/></svg>
<svg style="left:858.5px;top:617px;" width="6" height="4" viewBox="0 0 6 4"><path d="M3 4l3-4H0z" fill="#505050"/></svg>
<div class="a" style="left:867.5px;top:203px;width:193px;height:423px;background:#fff;"></div>
<div class="a" style="left:1060.5px;top:203px;width:10.5px;height:423px;background:#f4f4f4;"></div>
<div class="a" style="left:1061.5px;top:215px;width:8.5px;height:328px;background:#c1c1c1;"></div>
<svg style="left:1062.5px;top:207.5px;" width="6" height="4" viewBox="0 0 6 4"><path d="M3 0l3 4H0z" fill="#a3a3a3"/></svg>
<svg style="left:1062.5px;top:617px;" width="6" height="4" viewBox="0 0 6 4"><path d="M3 4l3-4H0z" fill="#505050"/></svg>
<div class="a" style="left:879px;top:214px;font-size:9.3px;line-height:11px;letter-spacing:-0.28px;color:#1e1e1e;">Post</div>
<div class="a" style="left:918.5px;top:214px;font-size:9.3px;line-height:11px;letter-spacing:-0.35px;color:#1e1e1e;">Block</div>
<div class="a" style="left:867.5px;top:235px;width:193px;height:1px;background:#e0e0e0;"></div>
<div class="a" style="left:907px;top:233.5px;width:44px;height:2px;background:#1a6da3;"></div>
<svg style="left:1037px;top:215.5px;" width="7" height="7" viewBox="0 0 7 7"><path d="M.5.500l6 6M6.500.5l-6 6" stroke="#1e1e1e" stroke-width="1.200"/></svg>
<svg style="left:881px;top:248px;" width="12.5" height="12" viewBox="0 0 12.500 12"><rect x=".6" y=".6" width="11.300" height="10.800" rx="1.200" fill="none" stroke="#1e1e1e" stroke-width="1.200"/><path d="M.8 7.800l2.900-1.900 2.300 1.500 2.400-1.900 3.200 2.100" fill="none" stroke="#1e1e1e" stroke-width="1.100"/></svg>
<div class="a" style="left:903.5px;top:249px;font-size:9px;line-height:11px;letter-spacing:-0px;color:#1e1e1e;-webkit-text-stroke:.35px #1e1e1e;">Image</div>
<div class="a" style="left:903.5px;top:267px;font-size:8.5px;line-height:10px;letter-spacing:0.11px;color:#444;">Insert an image to make a visual</div>
<div class="a" style="left:903.5px;top:279.5px;font-size:8.5px;line-height:10px;letter-spacing:0.08px;color:#444;">statement.</div>
<div class="a" style="left:903.5px;top:298.5px;font-size:8.5px;line-height:10px;letter-spacing:0.14px;color:#1a72ae;text-decoration:underline;">Block guide</div>
<svg style="left:910.25px;top:331px;" width="11.5" height="11.5" viewBox="0 0 11.500 11.500"><path d="M5.75 0.05L7.75 2.29L10.69 2.90L9.75 5.75L10.69 8.60L7.75 9.21L5.75 11.45L3.75 9.21L0.81 8.60L1.75 5.75L0.81 2.90L3.75 2.29Z" fill="#1e1e1e" stroke="#1e1e1e" stroke-width=".5" stroke-linejoin="round"/><circle cx="5.750" cy="5.750" r="2.150" fill="#fff"/></svg>
<svg style="left:1006.5px;top:331px;" width="11" height="11" viewBox="0 0 11 11"><circle cx="5.500" cy="5.500" r="4.800" fill="none" stroke="#1e1e1e" stroke-width="1.300"/><path d="M5.500.7a4.800 4.800 0 0 0 0 9.600z" fill="#1e1e1e"/></svg>
<div class="a" style="left:867.5px;top:352px;width:193px;height:1px;background:#e0e0e0;"></div>
<div class="a" style="left:867.5px;top:351.3px;width:96.5px;height:2px;background:#1a6da3;"></div>
<div class="a" style="left:879px;top:365px;font-size:9px;line-height:11px;letter-spacing:-0px;color:#1e1e1e;-webkit-text-stroke:.35px #1e1e1e;">Settings</div>
<svg style="left:1039.5px;top:365px;" width="2" height="11" viewBox="0 0 2 11"><circle cx="1" cy="1.200" r=".9" fill="#1e1e1e"/><circle cx="1" cy="5.500" r=".9" fill="#1e1e1e"/><circle cx="1" cy="9.800" r=".9" fill="#1e1e1e"/></svg>
<div class="a" style="left:879px;top:387.5px;font-size:7.3px;line-height:9px;letter-spacing:-0.27px;color:#1e1e1e;">ALTERNATIVE TEXT</div>
<div class="a" style="left:879px;top:403px;width:170px;height:58px;background:#fff;border:1px solid #949494;border-radius:2px"></div>
<svg style="left:1041px;top:453px;" width="6" height="6" viewBox="0 0 6 6"><path d="M5.500.5l-5 5M5.500 3.300L3.300 5.500" stroke="#555" stroke-width=".8"/></svg>
<div class="a" style="left:879px;top:467px;font-size:8px;line-height:10px;letter-spacing:0.07px;color:#1a72ae;text-decoration:underline;">Describe the purpose of the image.</div>
<svg style="left:1007.5px;top:469px;" width="5" height="5" viewBox="0 0 5 5"><path d="M2 .8H.6v3.600h3.600V3M2.800.5h1.700v1.700M4.400.6L2.300 2.700" fill="none" stroke="#0a6fb4" stroke-width=".7"/></svg>
<div class="a" style="left:879px;top:479.5px;font-size:8px;line-height:10px;letter-spacing:0.02px;color:#757575;">Leave empty if decorative.</div>
<div class="a" style="left:879px;top:502.5px;font-size:7.3px;line-height:9px;letter-spacing:-0.28px;color:#1e1e1e;">ASPECT RATIO</div>
<div class="a" style="left:879px;top:517px;width:170px;height:28px;background:#fff;border:1px solid #949494;border-radius:2px"></div>
<div class="a" style="left:889.5px;top:526px;font-size:9px;line-height:11px;letter-spacing:0.06px;color:#1e1e1e;">Original</div>
<svg style="left:1031px;top:529.5px;" width="7" height="5" viewBox="0 0 7 5"><path d="M.7.700l2.800 2.800L6.300.7" fill="none" stroke="#1e1e1e" stroke-width="1.200"/></svg>
<div class="a" style="left:879px;top:556.5px;font-size:7.3px;line-height:9px;letter-spacing:0.02px;color:#1e1e1e;">WIDTH</div>
<div class="a" style="left:967px;top:556.5px;font-size:7.3px;line-height:9px;letter-spacing:-0.26px;color:#1e1e1e;">HEIGHT</div>
<div class="a" style="left:879px;top:571.5px;width:82px;height:27.5px;background:#fff;border:1px solid #949494;border-radius:2px"></div>
<div class="a" style="left:966.5px;top:571.5px;width:82.5px;height:27.5px;background:#fff;border:1px solid #949494;border-radius:2px"></div>
<div class="a" style="left:889.5px;top:580px;font-size:9px;line-height:11px;letter-spacing:-0.17px;color:#1e1e1e;">650</div>
<div class="a" style="left:942.5px;top:580.5px;font-size:8.5px;line-height:10px;letter-spacing:0.26px;color:#1e1e1e;">px</div>
<div class="a" style="left:977.5px;top:580px;font-size:9px;line-height:11px;letter-spacing:0.12px;color:#8a8a8a;">Auto</div>
<div class="a" style="left:1030.5px;top:580.5px;font-size:8.5px;line-height:10px;letter-spacing:0.26px;color:#1e1e1e;">px</div>
<div class="a" style="left:879px;top:610.5px;font-size:7.3px;line-height:9px;letter-spacing:-0.25px;color:#1e1e1e;">RESOLUTION</div>
<!-- sec_task -->
<div class="a" style="left:20px;top:643px;width:1051px;height:27px;background:linear-gradient(90deg,#231d23 0%,#241e24 38%,#2f2929 47%,#3d3535 56%,#413939 65%,#3a3235 74%,#342c31 84%,#342c31 100%);"></div>
<div class="a" style="left:88px;top:643px;width:33.5px;height:27px;background:#494449;"></div>
<div class="a" style="left:88px;top:668px;width:33.5px;height:1.7px;background:#d88ee6;"></div>
<div class="a" style="left:124.5px;top:668px;width:28px;height:1.7px;background:#d88ee6;"></div>
<div class="a" style="left:158.5px;top:668px;width:28px;height:1.7px;background:#d88ee6;"></div>
<div class="a" style="left:294px;top:668px;width:28px;height:1.7px;background:#d88ee6;"></div>
<div class="a" style="left:328px;top:668px;width:28px;height:1.7px;background:#d88ee6;"></div>
<div class="a" style="left:362px;top:668px;width:28px;height:1.7px;background:#d88ee6;"></div>
<div class="a" style="left:396px;top:668px;width:28px;height:1.7px;background:#d88ee6;"></div>
<svg style="left:20px;top:643px;" width="1051" height="27" viewBox="20 643 1051 27"><path d="M31 651.800l4.600-.7v4.900H31zM36.400 651l5.600-.8v5.800h-5.600zM31 656.800h4.600v4.900L31 661zM36.400 656.800H42v5.800l-5.600-.8z" fill="#fff"/><circle cx="71" cy="654.800" r="4.900" fill="none" stroke="#fff" stroke-width="1.600"/><path d="M67.500 658.500l-5 5" stroke="#fff" stroke-width="1.800" stroke-linecap="round"/><g transform="translate(104.5 655.5)"><circle r="8" fill="#fff"/><path d="M0 0L-6.930 -4A8 8 0 0 1 6.930 -4z" fill="#ea4335"/><path d="M0 0L6.930 -4A8 8 0 0 1 0 8z" fill="#fbbc05"/><path d="M0 0L0 8A8 8 0 0 1 -6.930 -4z" fill="#34a853"/><circle r="3.700" fill="#fff"/><circle r="2.900" fill="#4285f4"/></g><circle cx="107.500" cy="659.500" r="4.200" fill="#f1e7e0"/><circle cx="107.500" cy="658.200" r="2" fill="#3d302c"/><ellipse cx="107.500" cy="659.200" rx="1.500" ry="1.700" fill="#e8c6b2"/><circle cx="137.500" cy="655.500" r="7" fill="none" stroke="#2fd366" stroke-width="2"/><path d="M130.500 663.500l1.600-4.500 2.600 2.900z" fill="#2fd366"/><path d="M134.500 652c-.8.800-.4 2.700 1.300 4.400s3.600 2.100 4.400 1.300l-1.500-1.500-1 .5c-.9-.4-1.700-1.300-2.100-2.100l.5-1z" fill="#2fd366"/><circle cx="146.800" cy="661.200" r="5.200" fill="#2a252a" stroke="#e8e8e8" stroke-width=".7"/><path d="M176 647.500l4 1.800v13.400l-4 1.800-9-8.200-3.200 2.500-1.500-.8v-4l1.500-.8 3.200 2.500zM176 652l-5 4 5 4z" fill="#23a6f0" fill-rule="evenodd"/><path d="M176 647.500l4 1.800v13.400l-4 1.800z" fill="#0d7fd0"/><g transform="translate(206 656)"><path d="M-3.600-8h3.600v5.300h-3.600a2.650 2.650 0 0 1 0-5.300z" fill="#f24e1e"/><path d="M0-8h3.600a2.650 2.650 0 0 1 0 5.300H0z" fill="#ff7262"/><path d="M-3.600-2.700H0v5.300h-3.600a2.650 2.650 0 0 1 0-5.300z" fill="#a259ff"/><circle cx="2.650" cy="0" r="2.650" fill="#1abcfe"/><path d="M-3.600 2.700H0v2.600a2.650 2.650 0 1 1-3.600-2.600z" fill="#0acf83"/></g><path d="M232.500 650h5l1.500 1.500h8.500v10.500h-15z" fill="#f5b93a"/><path d="M232.500 653h15v9h-15z" fill="#fbd567"/><path d="M235 657h10v5h-10z" fill="#4a9fe6"/><path d="M237.500 659h5v3h-5z" fill="#f3d56a"/><path d="M267.500 652.500l13-2.500v3l-13 2z" fill="#f2f2f2"/><path d="M270 652l1.500 2M274 651.300l1.500 2M278 650.600l1.500 2" stroke="#222" stroke-width="1.300"/><path d="M267.500 655h13v7.500h-13z" fill="#f4f4f4"/><circle cx="307.500" cy="655.500" r="8" fill="#5b68f0"/><path d="M303 653c2.500-1.500 6.500-1.500 9 0 1 2 1.500 4 1.500 6-1 .8-2 1.200-3 1.400l-.7-1.200c-1.500.5-3.100.5-4.600 0l-.7 1.200c-1-.2-2-.6-3-1.400 0-2 .5-4 1.500-6z" fill="#fff"/><circle cx="305.700" cy="656.800" r="1" fill="#5b68f0"/><circle cx="309.300" cy="656.800" r="1" fill="#5b68f0"/><circle cx="312.300" cy="660.800" r="4.300" fill="#e8413f"/><g transform="translate(341.600 656)"><circle r="4.300" fill="none" stroke="#fff" stroke-width="2.200"/><path d="M-1.300 -7.300h2.600v3h-2.600z" fill="#fff" transform="rotate(0)"/><path d="M-1.300 -7.300h2.600v3h-2.600z" fill="#fff" transform="rotate(45)"/><path d="M-1.300 -7.300h2.600v3h-2.600z" fill="#fff" transform="rotate(90)"/><path d="M-1.300 -7.300h2.600v3h-2.600z" fill="#fff" transform="rotate(135)"/><path d="M-1.300 -7.300h2.600v3h-2.600z" fill="#fff" transform="rotate(180)"/><path d="M-1.300 -7.300h2.600v3h-2.600z" fill="#fff" transform="rotate(225)"/><path d="M-1.300 -7.300h2.600v3h-2.600z" fill="#fff" transform="rotate(270)"/><path d="M-1.300 -7.300h2.600v3h-2.600z" fill="#fff" transform="rotate(315)"/></g><g transform="translate(374.5 655.5)"><circle r="8" fill="#fff"/><path d="M0 0L-6.930 -4A8 8 0 0 1 6.930 -4z" fill="#ea4335"/><path d="M0 0L6.930 -4A8 8 0 0 1 0 8z" fill="#fbbc05"/><path d="M0 0L0 8A8 8 0 0 1 -6.930 -4z" fill="#34a853"/><circle r="3.700" fill="#fff"/><circle r="2.900" fill="#4285f4"/></g><circle cx="378.500" cy="659.500" r="4.300" fill="#d9e4ee"/><circle cx="378.500" cy="658" r="1.500" fill="#6e8fb0"/><path d="M375.600 662c.5-2 5.300-2 5.800 0z" fill="#6e8fb0"/><rect x="401.500" y="647.500" width="16.500" height="16.500" rx="6" fill="#0b5cff"/><path d="M865.500 659l4-4 4 4" fill="none" stroke="#fff" stroke-width="1.100"/><g fill="none" stroke="#e8e8e8" stroke-width="1"><path d="M882.500 660.500a7.500 7.500 0 0 1 7.500-7.500M884.500 660.700a5.300 5.300 0 0 1 5.300-5.300M886.500 661a3.200 3.200 0 0 1 3.200-3.200"/></g><circle cx="889.300" cy="660.700" r=".9" fill="#fff"/><rect x="900.200" y="651" width="3.600" height="7" rx="1.800" fill="#e4e4e4"/><path d="M898.800 656.500a3.200 3.200 0 0 0 6.400 0M902 659.700v2M900 661.900h4" fill="none" stroke="#e4e4e4" stroke-width=".9"/><rect x="914.500" y="654" width="8" height="5.500" fill="none" stroke="#fff" stroke-width=".9"/><path d="M913.200 655.500h1.300v2.500h-1.300zM915.500 655h3.500v3.500h-3.500z" fill="#fff"/><path d="M913 652.500l2.500 1.500" stroke="#fff" stroke-width=".8"/><path d="M930.500 660c-1.600 0-2.400-1-2.400-2s.9-2 2.200-2c.4-1.500 1.700-2.300 3.200-2.300 1.600 0 2.900 1 3.200 2.400 1.400.1 2.400.9 2.400 2s-.9 1.900-2.300 1.900z" fill="#f0f0f0"/><path d="M947 655.300h1.600l2.200-2v7.400l-2.200-2H947z" fill="none" stroke="#fff" stroke-width=".8"/><path d="M952.300 655.300a2.300 2.300 0 0 1 0 3.400M953.800 653.800a4.400 4.400 0 0 1 0 6.400" fill="none" stroke="#fff" stroke-width=".8"/><path d="M1043 651.500h11v8.500h-5l-2.500 2v-2H1043z" fill="#fff"/><path d="M1045 654h7M1045 656h7M1045 658h4" stroke="#342c31" stroke-width=".7"/><circle cx="1052.500" cy="660" r="2.300" fill="#342c31" stroke="#fff" stroke-width=".7"/></svg>
<div class="a" style="left:143.3px;top:657.3px;font-size:6.5px;line-height:8px;letter-spacing:-0.07px;color:#fff;font-weight:bold;">68</div>
<div class="a" style="left:309.2px;top:657.5px;font-size:6px;line-height:7px;letter-spacing:-0.17px;color:#fff;font-weight:bold;">9+</div>
<div class="a" style="left:268.2px;top:655px;font-size:6.5px;line-height:8px;letter-spacing:0.32px;color:#d33;font-weight:bold;">321</div>
<div class="a" style="left:404px;top:652.3px;font-size:4.8px;line-height:6px;letter-spacing:-0.21px;color:#fff;font-weight:bold;">zoom</div>
<div class="a" style="left:964.5px;top:652.3px;font-size:7.8px;line-height:9px;letter-spacing:-0.47px;color:#fff;">ENG</div>
<div class="a" style="left:1000px;top:646px;font-size:7.8px;line-height:9px;letter-spacing:-0.2px;color:#fff;">21:04</div>
<div class="a" style="left:989.5px;top:658px;font-size:7.8px;line-height:9px;letter-spacing:0.18px;color:#fff;">30/03/2024</div>
<div class="a" style="left:1067px;top:643px;width:1.5px;height:27px;background:#554c52;"></div>
<!-- sec_zoombar -->
<svg style="left:3px;top:670px;" width="1365" height="52" viewBox="3 670 1365 52"><rect x="44.700" y="676" width="8.600" height="14.500" rx="4.300" fill="#a6a6a6"/><path d="M41.800 686.500a7.200 7.200 0 0 0 14.400 0M49 693.800v3.400M45.500 697.300h7" fill="none" stroke="#a6a6a6" stroke-width="1.400"/><path d="M61 675L37.300 698.600" stroke="#1a1a1a" stroke-width="3.400"/><path d="M61 675L37.300 698.600" stroke="#ee5b5b" stroke-width="1.500"/><rect x="130" y="680.300" width="17" height="14" rx="2.500" fill="#a6a6a6"/><path d="M147.800 685.500l6.500-4.300v12.400l-6.500-4.300z" fill="#a6a6a6"/><path d="M153.700 675L130.400 698.600" stroke="#1a1a1a" stroke-width="3.400"/><path d="M153.700 675L130.400 698.600" stroke="#ee5b5b" stroke-width="1.500"/><circle cx="366" cy="683" r="4.400" fill="#c9c9c9"/><path d="M358 696.300c0-5 3-7.300 8-7.300s8 2.300 8 7.300z" fill="#c9c9c9"/><circle cx="376.500" cy="684" r="3.500" fill="#c9c9c9"/><path d="M375.500 696.300c0-3-.8-5-2.300-6.300 1-.5 2-.7 3.300-.7 3.800 0 6 2 6 7z" fill="#c9c9c9"/><path d="M472.700 677.700h14.300a3 3 0 0 1 3 3v7.600a3 3 0 0 1-3 3h-6.500l-5.300 4.400v-4.400h-2.500a3 3 0 0 1-3-3v-7.600a3 3 0 0 1 3-3z" fill="#c9c9c9"/><rect x="562" y="678.300" width="24" height="17.400" rx="3" fill="#2fd85d"/><path d="M574 692v-9.500M570.300 686l3.700-3.700 3.700 3.700" fill="none" stroke="#10301a" stroke-width="1.800"/><circle cx="662.900" cy="686.900" r="9.600" fill="none" stroke="#c9c9c9" stroke-width="1.500"/><circle cx="662.900" cy="686.900" r="7" fill="#c9c9c9"/><rect x="738" y="678.300" width="24" height="17.700" rx="3" fill="#c9c9c9"/><circle cx="837.500" cy="687.800" r="8.400" fill="#c9c9c9"/><circle cx="834.500" cy="685.800" r="1.100" fill="#1a1a1a"/><circle cx="840.500" cy="685.800" r="1.100" fill="#1a1a1a"/><path d="M833.500 690c1.800 2.700 6.200 2.700 8 0" fill="none" stroke="#1a1a1a" stroke-width="1.200"/><circle cx="846.700" cy="678.800" r="4.800" fill="#1a1a1a"/><path d="M846.700 675.300v7M843.200 678.800h7" stroke="#c9c9c9" stroke-width="1.300"/><g fill="none" stroke="#c9c9c9" stroke-width="1.700"><path d="M910.500 685v-3a2.500 2.500 0 0 1 2.500-2.500h3M926 691v3a2.500 2.500 0 0 1-2.500 2.500h-3"/><circle cx="923.500" cy="682" r="2.300"/><circle cx="913" cy="694" r="2.300"/></g><path d="M1004 692.300h-4.100a2.200 2.200 0 0 1-2.200-2.200v-8.800a2.200 2.200 0 0 1 2.200-2.200h14.200a2.200 2.200 0 0 1 2.200 2.200v5" fill="none" stroke="#c9c9c9" stroke-width="1.600"/><rect x="1006.500" y="689.300" width="11" height="4.600" rx="2.300" fill="#c9c9c9"/><path d="M1104 695.800h-1.800a2 2 0 0 1-2-2v-12.600a2 2 0 0 1 2-2h8.800a2 2 0 0 1 2 2v7.500" fill="none" stroke="#c9c9c9" stroke-width="1.500"/><path d="M1103.500 683.300h6.500M1103.500 686.500h6.500M1103.500 689.700h3.500M1098.200 682.500h2.500M1098.200 686h2.500M1098.200 689.500h2.500M1098.200 693h2.500" stroke="#c9c9c9" stroke-width="1.200"/><rect x="1105.500" y="692.300" width="9.500" height="4.400" rx="2.200" fill="#c9c9c9"/></svg>
<svg style="left:76.9px;top:684.5px;" width="8" height="5.5" viewBox="0 0 8 5.500"><path d="M.7 4.800L4 1.300l3.300 3.500" fill="none" stroke="#c9c9c9" stroke-width="1.400"/></svg>
<svg style="left:174.9px;top:684.5px;" width="8" height="5.5" viewBox="0 0 8 5.500"><path d="M.7 4.800L4 1.300l3.300 3.500" fill="none" stroke="#c9c9c9" stroke-width="1.400"/></svg>
<svg style="left:419px;top:684.5px;" width="8" height="5.5" viewBox="0 0 8 5.500"><path d="M.7 4.800L4 1.300l3.300 3.500" fill="none" stroke="#c9c9c9" stroke-width="1.400"/></svg>
<svg style="left:509.2px;top:684.5px;" width="8" height="5.5" viewBox="0 0 8 5.500"><path d="M.7 4.800L4 1.300l3.300 3.500" fill="none" stroke="#c9c9c9" stroke-width="1.400"/></svg>
<svg style="left:781.7px;top:684.5px;" width="8" height="5.5" viewBox="0 0 8 5.500"><path d="M.7 4.800L4 1.300l3.300 3.500" fill="none" stroke="#c9c9c9" stroke-width="1.400"/></svg>
<div class="a" style="left:386.5px;top:678px;font-size:12px;line-height:14px;letter-spacing:0.33px;color:#c9c9c9;">28</div>
<div class="a" style="left:743px;top:680.9px;font-size:10.5px;line-height:13px;letter-spacing:-0.48px;color:#1a1a1a;font-weight:bold;">CC</div>
<div class="a" style="left:27.5px;top:703.2px;font-size:12.5px;line-height:15px;letter-spacing:-0.21px;color:#cdcdcd;-webkit-text-stroke:.25px #cdcdcd;">Unmute</div>
<div class="a" style="left:112px;top:703.2px;font-size:12.5px;line-height:15px;letter-spacing:-0.27px;color:#cdcdcd;-webkit-text-stroke:.25px #cdcdcd;">Start Video</div>
<div class="a" style="left:338.8px;top:703.2px;font-size:12.5px;line-height:15px;letter-spacing:-0.24px;color:#cdcdcd;-webkit-text-stroke:.25px #cdcdcd;">Participants</div>
<div class="a" style="left:468.3px;top:703.2px;font-size:12.5px;line-height:15px;letter-spacing:-0.58px;color:#cdcdcd;-webkit-text-stroke:.25px #cdcdcd;">Chat</div>
<div class="a" style="left:539px;top:703.2px;font-size:12.5px;line-height:15px;letter-spacing:-0.64px;color:#3fd267;-webkit-text-stroke:.25px #3fd267;">Share Screen</div>
<div class="a" style="left:644.3px;top:703.2px;font-size:12.5px;line-height:15px;letter-spacing:-0.62px;color:#cdcdcd;-webkit-text-stroke:.25px #cdcdcd;">Record</div>
<div class="a" style="left:711.2px;top:703.2px;font-size:12.5px;line-height:15px;letter-spacing:-0.41px;color:#cdcdcd;-webkit-text-stroke:.25px #cdcdcd;">Show Captions</div>
<div class="a" style="left:812.3px;top:703.2px;font-size:12.5px;line-height:15px;letter-spacing:-0.58px;color:#cdcdcd;-webkit-text-stroke:.25px #cdcdcd;">Reactions</div>
<div class="a" style="left:904.4px;top:703.2px;font-size:12.5px;line-height:15px;letter-spacing:-0.47px;color:#cdcdcd;-webkit-text-stroke:.25px #cdcdcd;">Apps</div>
<div class="a" style="left:973.4px;top:703.2px;font-size:12.5px;line-height:15px;letter-spacing:-0.25px;color:#cdcdcd;-webkit-text-stroke:.25px #cdcdcd;">Whiteboards</div>
<div class="a" style="left:1089.3px;top:703.2px;font-size:12.5px;line-height:15px;letter-spacing:-0.43px;color:#cdcdcd;-webkit-text-stroke:.25px #cdcdcd;">Notes</div>
<div class="a" style="left:1296px;top:682.5px;width:61px;height:27.2px;background:#c4282b;border-radius:7px"></div>
<div class="a" style="left:1309px;top:689px;font-size:12px;line-height:14px;letter-spacing:-0.21px;color:#fff;font-weight:bold;">Leave</div>
<!-- sec_videos -->
<div class="a" style="left:1086px;top:361px;width:1px;height:25.5px;background:#b8b8b8;"></div>
<div class="a" style="left:1089px;top:361px;width:1px;height:25.5px;background:#b8b8b8;"></div>
<svg style="left:1100px;top:226.5px;" width="256" height="144.5" viewBox="1100 226.500 256 144.500"><defs><linearGradient id="wall" x1="0" x2="1"><stop offset="0" stop-color="#82827d"/><stop offset=".1" stop-color="#a3a39c"/><stop offset=".35" stop-color="#b5b5ad"/><stop offset=".6" stop-color="#a9a9a1"/><stop offset=".8" stop-color="#8d8d87"/><stop offset="1" stop-color="#6a6a66"/></linearGradient><radialGradient id="flare" cx=".5" cy=".5" r=".5"><stop offset="0" stop-color="#fff"/><stop offset=".5" stop-color="#fff" stop-opacity=".95"/><stop offset="1" stop-color="#fff" stop-opacity="0"/></radialGradient><linearGradient id="shade" x1="0" x2="0" y1="0" y2="1"><stop offset="0" stop-color="#000" stop-opacity=".1"/><stop offset=".25" stop-color="#000" stop-opacity="0"/><stop offset=".7" stop-color="#000" stop-opacity=".04"/><stop offset="1" stop-color="#000" stop-opacity=".28"/></linearGradient><linearGradient id="facesh" x1="0" x2="1"><stop offset="0" stop-color="#a38a7a"/><stop offset=".55" stop-color="#876b5c"/><stop offset="1" stop-color="#5f4b41"/></linearGradient><filter id="soft" x="-5%" y="-5%" width="110%" height="110%"><feGaussianBlur stdDeviation=".55"/></filter><clipPath id="c1"><rect x="1100" y="226.500" width="256" height="144.500"/></clipPath></defs><g clip-path="url(#c1)"><rect x="1100" y="226.500" width="256" height="144.500" fill="url(#wall)"/><g filter="url(#soft)"><g fill="none" stroke="#30302e" stroke-linecap="round"><path d="M1219 302c2-22-2-38-14-52M1228 302c-2-24 4-40 14-54M1223 300c0-20 0-36-2-52" stroke-width="5"/><path d="M1210 258c-14-14-34-22-60-26M1206 250c-8-10-18-16-30-22M1214 272c-18-8-42-10-66-4M1216 284c-16-4-36-2-54 8M1236 256c10-14 26-22 46-28M1240 250c4-8 10-16 20-22M1234 270c18-10 42-14 70-10M1232 282c20-6 44-4 66 6M1222 248c0-8 2-14 6-22M1214 246c-4-8-10-14-18-18M1250 244c14-2 30-8 44-18" stroke-width="2.800"/><path d="M1150 232l-18-2M1160 238l-14 10M1176 228l-12-8M1168 268l-22 8M1180 262l-16-10M1162 292l-18 6M1190 240l-6-12M1282 228l16-2M1304 260l18-2M1298 288l18 8M1280 240l14-10M1264 258l18-12M1294 226l10-8M1290 272l20-8M1200 276l-18 8M1256 280l20 6" stroke-width="1.600"/><path d="M1218 340c-22 2-48-4-74 10M1236 338c26 4 56-4 82 12M1214 346c-20 2-34 12-30 30M1240 346c18 6 30 14 32 30" stroke-width="5.500" stroke-opacity=".7"/><path d="M1190 352c-14-4-26 2-24 14 2 8 12 8 16 2M1270 350c16-6 30 0 30 12" stroke-width="5" stroke-opacity=".65"/></g><path d="M1126 230c3-3.500 8-3.500 12 0-4 3.500-9 3.500-12 0z" fill="#30302e" transform="rotate(-10 1132 230)"/><path d="M1134 246c3-3.500 8-3.500 12 0-4 3.500-9 3.500-12 0z" fill="#30302e" transform="rotate(30 1140 246)"/><path d="M1140 262c3-3.500 8-3.500 12 0-4 3.500-9 3.500-12 0z" fill="#30302e" transform="rotate(10 1146 262)"/><path d="M1132 278c3-3.500 8-3.500 12 0-4 3.500-9 3.500-12 0z" fill="#30302e" transform="rotate(-10 1138 278)"/><path d="M1138 300c3-3.500 8-3.500 12 0-4 3.500-9 3.500-12 0z" fill="#30302e" transform="rotate(-10 1144 300)"/><path d="M1144 244c3-3.500 8-3.500 12 0-4 3.500-9 3.500-12 0z" fill="#30302e" transform="rotate(-40 1150 244)"/><path d="M1150 222c3-3.500 8-3.500 12 0-4 3.500-9 3.500-12 0z" fill="#30302e" transform="rotate(-40 1156 222)"/><path d="M1154 284c3-3.500 8-3.500 12 0-4 3.500-9 3.500-12 0z" fill="#30302e" transform="rotate(30 1160 284)"/><path d="M1158 256c3-3.500 8-3.500 12 0-4 3.500-9 3.500-12 0z" fill="#30302e" transform="rotate(-30 1164 256)"/><path d="M1160 236c3-3.500 8-3.500 12 0-4 3.500-9 3.500-12 0z" fill="#30302e" transform="rotate(-20 1166 236)"/><path d="M1170 228c3-3.500 8-3.500 12 0-4 3.500-9 3.500-12 0z" fill="#30302e" transform="rotate(-50 1176 228)"/><path d="M1174 250c3-3.500 8-3.500 12 0-4 3.500-9 3.500-12 0z" fill="#30302e" transform="rotate(-10 1180 250)"/><path d="M1172 270c3-3.500 8-3.500 12 0-4 3.500-9 3.500-12 0z" fill="#30302e" transform="rotate(25 1178 270)"/><path d="M1178 290c3-3.500 8-3.500 12 0-4 3.500-9 3.500-12 0z" fill="#30302e" transform="rotate(15 1184 290)"/><path d="M1186 232c3-3.500 8-3.500 12 0-4 3.500-9 3.500-12 0z" fill="#30302e" transform="rotate(-60 1192 232)"/><path d="M1188 256c3-3.500 8-3.500 12 0-4 3.500-9 3.500-12 0z" fill="#30302e" transform="rotate(-15 1194 256)"/><path d="M1194 286c3-3.500 8-3.500 12 0-4 3.500-9 3.500-12 0z" fill="#30302e" transform="rotate(10 1200 286)"/><path d="M1198 238c3-3.500 8-3.500 12 0-4 3.500-9 3.500-12 0z" fill="#30302e" transform="rotate(-50 1204 238)"/><path d="M1190 226c3-3.500 8-3.500 12 0-4 3.500-9 3.500-12 0z" fill="#30302e" transform="rotate(-70 1196 226)"/><path d="M1204 232c3-3.500 8-3.500 12 0-4 3.500-9 3.500-12 0z" fill="#30302e" transform="rotate(-60 1210 232)"/><path d="M1222 228c3-3.500 8-3.500 12 0-4 3.500-9 3.500-12 0z" fill="#30302e" transform="rotate(-100 1228 228)"/><path d="M1234 232c3-3.500 8-3.500 12 0-4 3.500-9 3.500-12 0z" fill="#30302e" transform="rotate(-110 1240 232)"/><path d="M1244 238c3-3.500 8-3.500 12 0-4 3.500-9 3.500-12 0z" fill="#30302e" transform="rotate(-130 1250 238)"/><path d="M1250 250c3-3.500 8-3.500 12 0-4 3.500-9 3.500-12 0z" fill="#30302e" transform="rotate(-150 1256 250)"/><path d="M1256 230c3-3.500 8-3.500 12 0-4 3.500-9 3.500-12 0z" fill="#30302e" transform="rotate(-140 1262 230)"/><path d="M1264 246c3-3.500 8-3.500 12 0-4 3.500-9 3.500-12 0z" fill="#30302e" transform="rotate(-160 1270 246)"/><path d="M1272 228c3-3.500 8-3.500 12 0-4 3.500-9 3.500-12 0z" fill="#30302e" transform="rotate(-120 1278 228)"/><path d="M1278 238c3-3.500 8-3.500 12 0-4 3.500-9 3.500-12 0z" fill="#30302e" transform="rotate(-150 1284 238)"/><path d="M1286 256c3-3.500 8-3.500 12 0-4 3.500-9 3.500-12 0z" fill="#30302e" transform="rotate(-170 1292 256)"/><path d="M1292 240c3-3.500 8-3.500 12 0-4 3.500-9 3.500-12 0z" fill="#30302e" transform="rotate(-150 1298 240)"/><path d="M1298 228c3-3.500 8-3.500 12 0-4 3.500-9 3.500-12 0z" fill="#30302e" transform="rotate(-130 1304 228)"/><path d="M1300 270c3-3.500 8-3.500 12 0-4 3.500-9 3.500-12 0z" fill="#30302e" transform="rotate(-190 1306 270)"/><path d="M1306 250c3-3.500 8-3.500 12 0-4 3.500-9 3.500-12 0z" fill="#30302e" transform="rotate(-160 1312 250)"/><path d="M1314 262c3-3.500 8-3.500 12 0-4 3.500-9 3.500-12 0z" fill="#30302e" transform="rotate(-170 1320 262)"/><path d="M1294 286c3-3.500 8-3.500 12 0-4 3.500-9 3.500-12 0z" fill="#30302e" transform="rotate(-200 1300 286)"/><path d="M1308 296c3-3.500 8-3.500 12 0-4 3.500-9 3.500-12 0z" fill="#30302e" transform="rotate(-170 1314 296)"/><path d="M1270 266c3-3.500 8-3.500 12 0-4 3.500-9 3.500-12 0z" fill="#30302e" transform="rotate(-170 1276 266)"/><path d="M1258 276c3-3.500 8-3.500 12 0-4 3.500-9 3.500-12 0z" fill="#30302e" transform="rotate(-190 1264 276)"/><path d="M1274 290c3-3.500 8-3.500 12 0-4 3.500-9 3.500-12 0z" fill="#30302e" transform="rotate(-200 1280 290)"/><path d="M1170 300c3-3.500 8-3.500 12 0-4 3.500-9 3.500-12 0z" fill="#30302e" transform="rotate(20 1176 300)"/><path d="M1250 292c3-3.500 8-3.500 12 0-4 3.500-9 3.500-12 0z" fill="#30302e" transform="rotate(-200 1256 292)"/><path d="M1238 262c3-3.500 8-3.500 12 0-4 3.500-9 3.500-12 0z" fill="#30302e" transform="rotate(-120 1244 262)"/><path d="M1292 218c3-3.500 8-3.500 12 0-4 3.500-9 3.500-12 0z" fill="#30302e" transform="rotate(-130 1298 218)"/><text x="1117" y="320" font-family="Liberation Serif,DejaVu Serif,serif" font-style="italic" font-weight="bold" font-size="31" fill="#2b2927" stroke="#2b2927" stroke-width=".9" textLength="208" lengthAdjust="spacingAndGlyphs">Saka Kalpataru</text><text x="1262" y="327" font-family="Liberation Sans,DejaVu Sans,sans-serif" font-weight="bold" font-size="8.500" fill="#5e5e5a" textLength="52" lengthAdjust="spacingAndGlyphs">SLEMAN</text><path d="M1176 371c4-10 18-15 32-17l14-5h20l14 5c16 2 30 7 34 17z" fill="#857660"/><path d="M1188 361l18-5 2 5-18 6zM1262 356l20 5-2 5-20-5z" fill="#2a2622"/><path d="M1192 360l8-2 1 3-8 2.500z" fill="#a8905a"/><path d="M1216 334h30v24l-15 8-15-8z" fill="#7a5f4e"/><path d="M1222 358l10 12 10-12 8 6-6 8h-26l-4-8z" fill="#9a8a70"/><path d="M1203 318c0-22 10-30 24-30 16 0 26 12 24 34-2 18-12 34-26 36-12 0-20-14-22-40z" fill="url(#facesh)"/><path d="M1198 318c-5-24 8-35 29-34.500 23 0 35 13 30 37-1 9-4 15-7 19-1-10-2-18-7-25-11 0-26-5-34-13-5 4-8 9-11 16.500z" fill="#19181a"/><ellipse cx="1247" cy="329" rx="4" ry="7.500" fill="#80624f"/><g fill="#3a2f2a" fill-opacity=".35" stroke="#141314" stroke-width="1.900"><rect x="1195.500" y="321" width="13" height="12" rx="2.500"/><rect x="1212.500" y="320" width="15.500" height="13" rx="2.500"/></g><path d="M1208.500 325.500h4M1228 324l16-2.500" stroke="#141314" stroke-width="1.900" fill="none"/><path d="M1204 346.500c3 1.200 7 1.200 10 0" stroke="#5e463a" stroke-width="1.300" fill="none"/></g><rect x="1100" y="226.500" width="256" height="144.500" fill="url(#shade)"/><ellipse cx="1116" cy="326" rx="19" ry="16" fill="url(#flare)"/><ellipse cx="1112" cy="343" rx="7" ry="10" fill="url(#flare)"/></g></svg>
<div class="a" style="left:1101.5px;top:352px;width:62px;height:18.5px;background:rgba(38,38,38,.82);"></div>
<svg style="left:1104px;top:354.5px;" width="12" height="14" viewBox="0 0 12 14"><rect x="4" y="1" width="4" height="7.500" rx="2" fill="#e5484d"/><path d="M2.300 6.500a3.700 3.700 0 0 0 7.400 0M6 10.300v2" fill="none" stroke="#e5484d" stroke-width="1"/><path d="M10.500.5L1.500 13" stroke="#e5484d" stroke-width="1.300"/></svg>
<svg style="left:1122px;top:354px;" width="12" height="14" viewBox="0 0 12 14"><path d="M3.500 1.500h5v1l-1 .8v3.200l2 2v1h-7v-1l2-2V3.300l-1-.8z" fill="#f2f2f2"/><path d="M6 9.500v4" stroke="#f2f2f2" stroke-width="1.200"/><circle cx="9.800" cy="2" r="1.700" fill="#f2f2f2"/></svg>
<div class="a" style="left:1140.7px;top:353.3px;font-size:13px;line-height:16px;letter-spacing:-0.71px;color:#fff;">MC</div>
<div class="a" style="left:1096px;top:373px;width:264.5px;height:152.5px;background:linear-gradient(180deg,#d3e680 0%,#cfe572 30%,#b9e052 45%,#c4e35e 60%,#eef08a 100%);"></div>
<div class="a" style="left:1098px;top:375px;width:260.5px;height:148.5px;background:linear-gradient(180deg,#b4df44 0%,#a3dc30 30%,#68d100 50%,#7fd610 62%,#e9ee78 92%,#f3f284 100%);"></div>
<svg style="left:1100.5px;top:377.5px;" width="255.5" height="143.5" viewBox="1100.500 377.500 255.500 143.500"><defs><radialGradient id="hair2" cx=".5" cy=".5" r=".5"><stop offset="0" stop-color="#464649"/><stop offset=".75" stop-color="#49494c"/><stop offset="1" stop-color="#4c4c4f" stop-opacity="0"/></radialGradient><radialGradient id="face2" cx=".5" cy=".4" r=".5"><stop offset="0" stop-color="#7c7c7e"/><stop offset=".5" stop-color="#6a6a6c" stop-opacity=".9"/><stop offset="1" stop-color="#58585a" stop-opacity="0"/></radialGradient><linearGradient id="bg2" x1="0" x2="1"><stop offset="0" stop-color="#5b5c5f"/><stop offset=".08" stop-color="#5f6063"/><stop offset=".2" stop-color="#56575a"/><stop offset=".85" stop-color="#5a5b5e"/><stop offset="1" stop-color="#545558"/></linearGradient><clipPath id="c2"><rect x="1100.500" y="377.500" width="255.500" height="143.500"/></clipPath></defs><g clip-path="url(#c2)"><rect x="1100.500" y="377.500" width="255.500" height="143.500" fill="url(#bg2)"/><filter id="b6" x="-20%" y="-20%" width="140%" height="140%"><feGaussianBlur stdDeviation="6"/></filter><filter id="b3" x="-30%" y="-30%" width="160%" height="160%"><feGaussianBlur stdDeviation="3"/></filter><filter id="b2" x="-30%" y="-60%" width="160%" height="220%"><feGaussianBlur stdDeviation="1.800"/></filter><ellipse cx="1218" cy="452" rx="74" ry="62" fill="#464649" filter="url(#b6)"/><ellipse cx="1246" cy="496" rx="38" ry="46" fill="#636365" filter="url(#b6)"/><ellipse cx="1246" cy="466" rx="20" ry="11" fill="#747476" filter="url(#b3)"/><ellipse cx="1242" cy="502" rx="7" ry="12" fill="#747476" filter="url(#b3)"/><ellipse cx="1223" cy="487" rx="12" ry="3.500" fill="#4e4e50" filter="url(#b2)"/><ellipse cx="1262" cy="485" rx="12" ry="3.500" fill="#4e4e50" filter="url(#b2)"/><ellipse cx="1238" cy="516" rx="10" ry="3" fill="#555557" filter="url(#b2)"/><path d="M1288 514c8-3 18-1 28 7h-30z" fill="#7676a2" opacity=".7"/></g></svg>
<div class="a" style="left:1100.5px;top:501.5px;width:106px;height:19.5px;background:rgba(52,52,54,.85);"></div>
<svg style="left:1104px;top:503.5px;" width="12" height="14" viewBox="0 0 12 14"><path d="M3.500 1.500h5v1l-1 .8v3.200l2 2v1h-7v-1l2-2V3.300l-1-.8z" fill="#f2f2f2"/><path d="M6 9.500v4" stroke="#f2f2f2" stroke-width="1.200"/><circle cx="9.800" cy="2" r="1.700" fill="#f2f2f2"/></svg>
<div class="a" style="left:1122.2px;top:503.5px;font-size:13px;line-height:16px;letter-spacing:0.14px;color:#fff;">Triandi Aprilio</div>
</body>
</html>
